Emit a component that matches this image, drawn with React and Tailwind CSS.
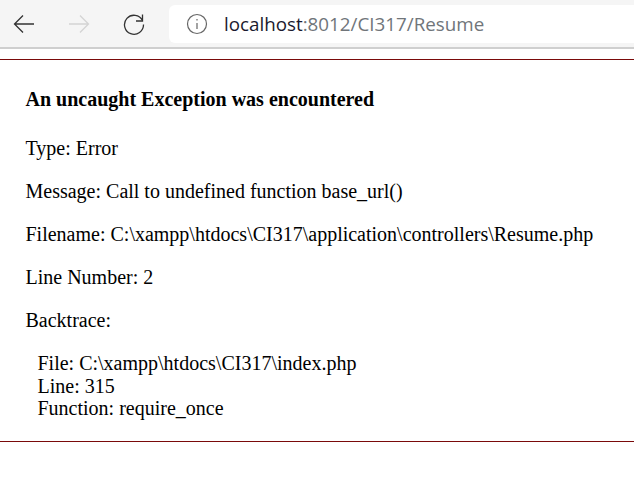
const Line = ({ children }) => <p className="mb-[20px] leading-[23px]">{children}</p>

export default function App() {
  return (
    <div className="w-[634px] h-[488px] bg-white overflow-hidden">
      <div className="h-[49px] bg-[#f5f5f5] border-b-[2px] border-[#cfcfcf] flex items-start">
        <div className="w-[169px] h-[47px] flex items-center shrink-0">
          <svg width="24" height="24" viewBox="0 0 24 24" fill="none" stroke="#333" strokeWidth="1.3" className="ml-[12px]">
            <path d="M22 12H3M11 3.500 2.500 12l8.500 8.500" />
          </svg>
          <svg width="24" height="24" viewBox="0 0 24 24" fill="none" stroke="#d4d4d4" strokeWidth="1.3" className="ml-[31px]">
            <path d="M2 12h19M13 3.500l8.500 8.500-8.500 8.500" />
          </svg>
          <svg width="24" height="24" viewBox="0 0 24 24" fill="none" stroke="#333" strokeWidth="1.3" className="ml-[31px]">
            <path d="M20.500 8.500A9.500 9.500 0 1 0 21.500 12.500" />
            <path d="M20.500 2.500v6.500h-6.500" />
          </svg>
        </div>
        <div className="mt-[5px] h-[38px] flex-1 bg-white rounded-l-[6px] flex items-center pl-[17px]">
          <svg width="22" height="22" viewBox="0 0 22 22" fill="none" stroke="#666" strokeWidth="1.2" className="shrink-0">
            <circle cx="11" cy="11" r="9.500" />
            <path d="M11 10v6M11 6v1.500" />
          </svg>
          <span className="ml-[16px] text-[18.8px] font-['Open_Sans',sans-serif] text-[#70757a]">
            <span className="text-[#1a1a2e]">localhost</span>:8012/CI317/Resume
          </span>
        </div>
      </div>
      <div className="mt-[10px] border-t border-[#7a0a0a]" />
      <div className="pl-[25.5px] pt-[28px] font-['Liberation_Serif',serif] text-[20px] text-black">
        <h4 className="font-bold leading-[23px] mb-[26px]">An uncaught Exception was encountered</h4>
        <Line>Type: Error</Line>
        <Line>Message: Call to undefined function base_url()</Line>
        <Line>Filename: C:\xampp\htdocs\CI317\application\controllers\Resume.php</Line>
        <Line>Line Number: 2</Line>
        <Line>Backtrace:</Line>
        <div className="pl-[12px] leading-[22.5px]">
          <div>File: C:\xampp\htdocs\CI317\index.php</div>
          <div>Line: 315</div>
          <div>Function: require_once</div>
        </div>
      </div>
      <div className="mt-[21.5px] border-t border-[#7a0a0a]" />
    </div>
  )
}
